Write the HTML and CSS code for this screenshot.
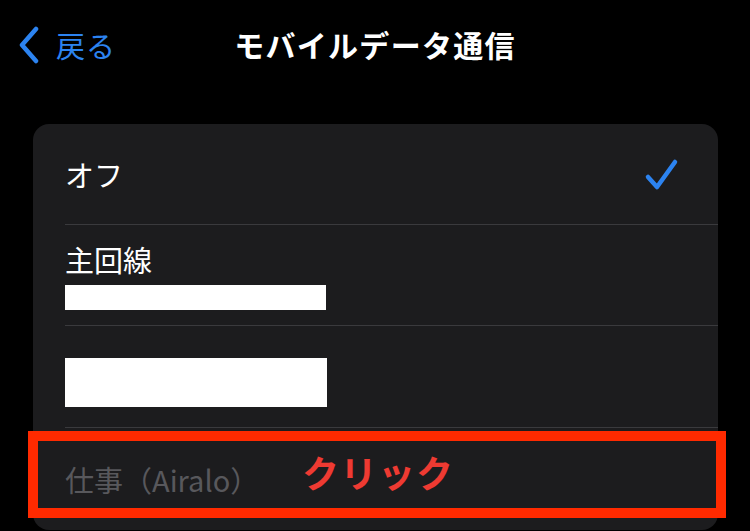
FILE: index.html
```html
<!DOCTYPE html>
<html lang="ja">
<head>
<meta charset="utf-8">
<link rel="stylesheet" href="styles.css">
</head>
<body>
<div class="screen">
  <header class="nav">
    <div class="back">
      <svg class="chev" width="22" height="38" viewBox="0 0 22 38"><path d="M18 3 L4 19 L18 35" fill="none" stroke="#2c83f0" stroke-width="4.5" stroke-linecap="round" stroke-linejoin="round"/></svg>
      <span class="back-text">戻る</span>
    </div>
    <h1 class="title">モバイルデータ通信</h1>
  </header>
  <section class="card">
    <div class="row row-off">
      <span class="label">オフ</span>
      <svg class="check" width="36" height="34" viewBox="0 0 36 34"><path d="M4 19 L13 29 L31 4" fill="none" stroke="#2c83f0" stroke-width="4.5" stroke-linecap="round" stroke-linejoin="round"/></svg>
    </div>
    <div class="row row-main">
      <span class="label">主回線</span>
      <div class="mask mask-small"></div>
    </div>
    <div class="row row-third">
      <div class="mask mask-big"></div>
    </div>
    <div class="row row-work">
      <span class="label label-dim">仕事（Airalo）</span>
      <div class="highlight">
        <span class="click">クリック</span>
      </div>
    </div>
  </section>
</div>
</body>
</html>
```
FILE: styles.css
```css
html, body {
  margin: 0;
  padding: 0;
  background: #000;
}
body {
  width: 750px;
  height: 531px;
  overflow: hidden;
  font-family: "Noto Sans CJK JP", "Noto Sans", sans-serif;
  color: #fff;
}
.screen {
  display: flex;
  flex-direction: column;
}
.nav {
  position: relative;
  height: 90px;
  display: flex;
  align-items: center;
  justify-content: center;
}
.back {
  position: absolute;
  left: 18px;
  top: 26px;
  display: flex;
  align-items: center;
  gap: 16px;
}
.chev {
  display: block;
}
.back-text {
  color: #2c83f0;
  font-size: 29px;
  line-height: 38px;
  letter-spacing: 1px;
}
.title {
  margin: 0;
  font-size: 30px;
  font-weight: 700;
  letter-spacing: 1.3px;
  line-height: 40px;
  margin-top: -2px;
}
.card {
  margin: 34px 32px 0 33px;
  background: #1c1c1e;
  border-radius: 16px;
  height: 406px;
  overflow: visible;
}
.row {
  position: relative;
  margin-left: 32px;
  display: flex;
  flex-direction: column;
  justify-content: center;
}
.row + .row {
  border-top: 1px solid #3a3a3d;
}
.label {
  font-size: 29px;
  line-height: 36px;
}
.row-off {
  height: 100px;
  flex-direction: row;
  align-items: center;
  justify-content: space-between;
  padding-right: 38px;
}
.check {
  display: block;
  margin-top: 1px;
}
.row-main {
  height: 101px;
  justify-content: flex-start;
  padding-top: 16px;
  box-sizing: border-box;
}
.mask {
  background: #fff;
}
.mask-small {
  width: 261px;
  height: 25px;
  margin-top: 8px;
}
.row-third {
  height: 101px;
  justify-content: center;
}
.mask-big {
  width: 262px;
  height: 49px;
  margin-top: 12px;
}
.row-work {
  height: 100px;
  justify-content: flex-start;
  padding-top: 33px;
  box-sizing: border-box;
}
.label-dim {
  color: #58585c;
  letter-spacing: 0;
}
.highlight {
  position: absolute;
  left: -37px;
  top: 3px;
  width: 698px;
  height: 87px;
  box-sizing: border-box;
  border: 10px solid #ff2a00;
  display: flex;
  align-items: center;
  padding-left: 264px;
}
.click {
  color: #ee3a32;
  font-size: 37px;
  font-weight: 700;
  letter-spacing: 1px;
  line-height: 44px;
  margin-top: -6px;
}
```
